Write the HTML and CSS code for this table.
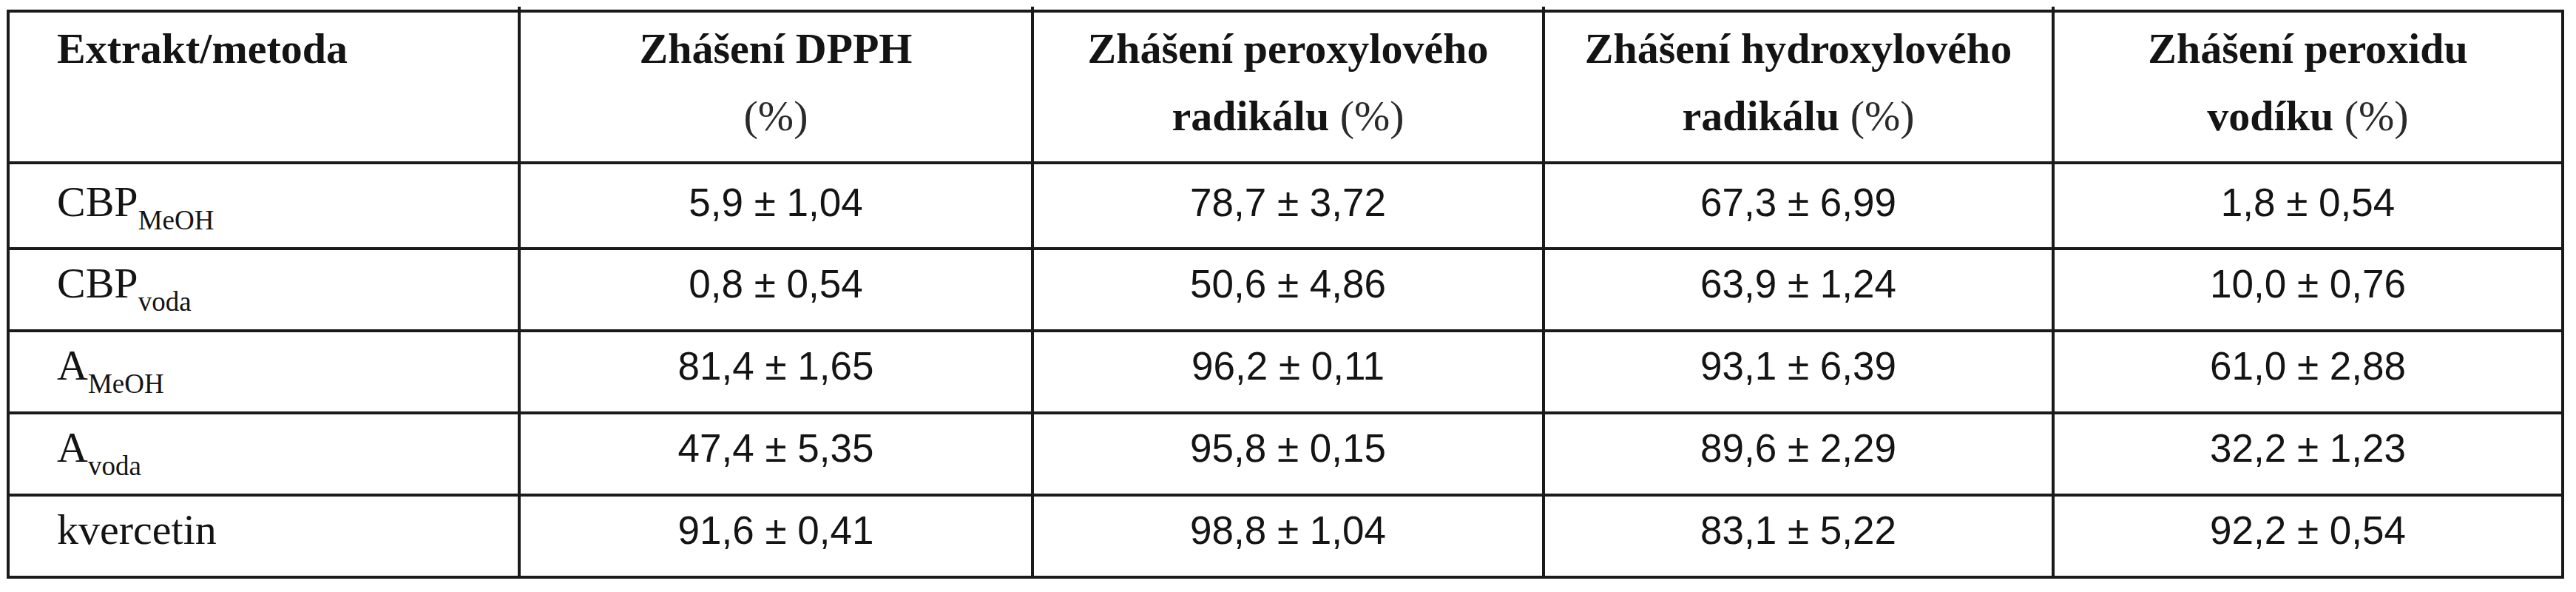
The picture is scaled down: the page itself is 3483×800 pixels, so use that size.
FILE: index.html
```html
<!DOCTYPE html>
<html lang="cs">
<head>
<meta charset="utf-8">
<title>Zhášení radikálů</title>
<link rel="stylesheet" href="styles.css">
</head>
<body>
<table class="results">
  <thead>
    <tr>
      <th class="c1 name-h">Extrakt/metoda</th>
      <th class="c2">Zhášení DPPH<br><span class="unit">(%)</span></th>
      <th class="c3">Zhášení peroxylového<br>radikálu <span class="unit">(%)</span></th>
      <th class="c4">Zhášení hydroxylového<br>radikálu <span class="unit">(%)</span></th>
      <th class="c5">Zhášení peroxidu<br>vodíku <span class="unit">(%)</span></th>
    </tr>
  </thead>
  <tbody>
    <tr class="first">
      <td class="name">CBP<sub>MeOH</sub></td>
      <td class="val">5,9 ± 1,04</td>
      <td class="val">78,7 ± 3,72</td>
      <td class="val">67,3 ± 6,99</td>
      <td class="val">1,8 ± 0,54</td>
    </tr>
    <tr>
      <td class="name">CBP<sub>voda</sub></td>
      <td class="val">0,8 ± 0,54</td>
      <td class="val">50,6 ± 4,86</td>
      <td class="val">63,9 ± 1,24</td>
      <td class="val">10,0 ± 0,76</td>
    </tr>
    <tr>
      <td class="name">A<sub>MeOH</sub></td>
      <td class="val">81,4 ± 1,65</td>
      <td class="val">96,2 ± 0,11</td>
      <td class="val">93,1 ± 6,39</td>
      <td class="val">61,0 ± 2,88</td>
    </tr>
    <tr>
      <td class="name">A<sub>voda</sub></td>
      <td class="val">47,4 ± 5,35</td>
      <td class="val">95,8 ± 0,15</td>
      <td class="val">89,6 ± 2,29</td>
      <td class="val">32,2 ± 1,23</td>
    </tr>
    <tr>
      <td class="name">kvercetin</td>
      <td class="val">91,6 ± 0,41</td>
      <td class="val">98,8 ± 1,04</td>
      <td class="val">83,1 ± 5,22</td>
      <td class="val">92,2 ± 0,54</td>
    </tr>
  </tbody>
</table>
</body>
</html>
```

FILE: styles.css
```css
html, body {
  margin: 0;
  padding: 0;
  background: #ffffff;
}

.results {
  margin: 13px 0 0 9px;
  width: 3458px;
  table-layout: fixed;
  border-collapse: separate;
  border-spacing: 0;
  border-top: 4px solid #1a1a1a;
  border-left: 4px solid #1a1a1a;
  color: #141414;
  font-family: "Liberation Serif", "Times New Roman", serif;
}

.results th,
.results td {
  box-sizing: border-box;
  border-right: 4px solid #1a1a1a;
  border-bottom: 4px solid #1a1a1a;
  white-space: nowrap;
}

.c1 { width: 691px; }
.c2 { width: 694px; }
.c3 { width: 691px; }
.c4 { width: 689px; }
.c5 { width: 689px; }

.results th {
  position: relative;
  font-size: 58px;
  font-weight: bold;
  line-height: 91px;
  padding: 3px 0 16px 0;
  text-align: center;
  vertical-align: top;
}

.results th:not(:last-child)::after {
  content: "";
  position: absolute;
  right: -4px;
  top: -8px;
  width: 4px;
  height: 4px;
  background: #1a1a1a;
}

.results th.name-h {
  text-align: left;
  padding-left: 64px;
}

.unit {
  font-weight: normal;
  color: #2a2a2a;
}

.results td {
  line-height: 66px;
  padding: 12px 0 28px 0;
  vertical-align: baseline;
}

.results tr.first td {
  padding-top: 18px;
  padding-bottom: 27px;
}

.name {
  font-size: 58px;
  text-align: left;
  padding-left: 64px !important;
}

.name sub {
  font-size: 37px;
  line-height: 0;
  vertical-align: -18px;
}

.val {
  font-family: "Liberation Sans", Arial, sans-serif;
  font-size: 53px;
  text-align: center;
}
```
